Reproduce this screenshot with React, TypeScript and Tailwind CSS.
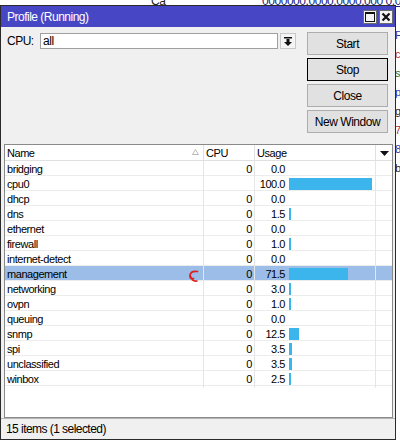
import React from "react";

type Proc = { name: string; cpu: string; usage: string; selected?: boolean };

const PROCS: Proc[] = [
  { name: "bridging", cpu: "0", usage: "0.0" },
  { name: "cpu0", cpu: "", usage: "100.0" },
  { name: "dhcp", cpu: "0", usage: "0.0" },
  { name: "dns", cpu: "0", usage: "1.5" },
  { name: "ethernet", cpu: "0", usage: "0.0" },
  { name: "firewall", cpu: "0", usage: "1.0" },
  { name: "internet-detect", cpu: "0", usage: "0.0" },
  { name: "management", cpu: "0", usage: "71.5", selected: true },
  { name: "networking", cpu: "0", usage: "3.0" },
  { name: "ovpn", cpu: "0", usage: "1.0" },
  { name: "queuing", cpu: "0", usage: "0.0" },
  { name: "snmp", cpu: "0", usage: "12.5" },
  { name: "spi", cpu: "0", usage: "3.5" },
  { name: "unclassified", cpu: "0", usage: "3.5" },
  { name: "winbox", cpu: "0", usage: "2.5" },
];

// full bar = 100% usage
const BAR_MAX = 83;

function barWidth(usage: string) {
  const v = parseFloat(usage);
  if (!v) return 0;
  return Math.max(2, Math.round((v / 100) * BAR_MAX));
}

function TitleButton({ kind }: { kind: "max" | "close" }) {
  return (
    <div className="w-[14px] h-[14px] bg-[#f4f4f4] border border-[#6b6b6b] flex items-center justify-center">
      {kind === "max" ? (
        <svg width="10" height="10" viewBox="0 0 10 10">
          <rect x="0.5" y="0.5" width="9" height="9" fill="none" stroke="#111" />
          <rect x="0" y="0" width="10" height="2" fill="#111" />
        </svg>
      ) : (
        <svg width="10" height="10" viewBox="0 0 10 10">
          <path d="M1.5 1.5 L8.5 8.5 M8.5 1.5 L1.5 8.5" stroke="#111" strokeWidth="2.2" />
        </svg>
      )}
    </div>
  );
}

function PushButton({ label, focused }: { label: string; focused?: boolean }) {
  return (
    <div
      className={`h-[23px] w-[81px] flex items-center justify-center bg-[#e1e1e1] text-[12px] tracking-[-0.45px] text-black border ${
        focused ? "border-[#000]" : "border-[#adadad]"
      }`}
    >
      {label}
    </div>
  );
}

// little red scribble left over next to the selected row
function Scribble() {
  return (
    <svg
      className="absolute right-[4px] top-[4px]"
      width="11"
      height="13"
      viewBox="0 0 11 13"
    >
      <path
        d="M9.5 1.5 Q3 0.5 2 5 Q1.5 9.5 5.5 8.5 M2.2 5.5 Q4 12 9 11"
        fill="none"
        stroke="#e0201c"
        strokeWidth="1.7"
        strokeLinecap="round"
      />
    </svg>
  );
}

export default function App() {
  return (
    <div className="relative w-[400px] h-[440px] bg-white overflow-hidden font-['Liberation_Sans',Arial,sans-serif] text-[11px] tracking-[-0.45px] text-black">
      {/* desktop window peeking out behind */}
      <div className="absolute top-[-8px] left-[151px] text-[12px] text-[#222]">Ca</div>
      <div className="absolute top-[-8px] left-[262px] text-[12px] text-[#1a237e] underline whitespace-nowrap">
        0000000.0000.0000.000 0.0 ncl
      </div>
      <div className="absolute top-[30px] left-[395px] flex flex-col gap-[9px] text-[11px] leading-[10px]">
        <span className="text-[#1a3fae]">F</span>
        <span className="text-[#b03030]">c</span>
        <span className="text-[#2b6e2b]">s</span>
        <span className="text-[#1a3fae]">p</span>
        <span className="text-[#222]">g</span>
        <span className="text-[#b03030]">7</span>
        <span className="text-[#1a3fae]">8</span>
        <span className="text-[#222]">b</span>
      </div>

      {/* Profile window */}
      <div className="absolute top-[5px] left-0 w-[396px] h-[435px] flex flex-col bg-[#f0f0f0] border border-[#2a2a2a]">
        {/* title bar */}
        <div className="h-[21px] shrink-0 bg-[#4747c6] flex items-center justify-between pl-[6px] pr-[2px]">
          <span className="text-white text-[12px] tracking-[-0.5px]">Profile (Running)</span>
          <div className="flex gap-[2px]">
            <TitleButton kind="max" />
            <TitleButton kind="close" />
          </div>
        </div>

        {/* controls */}
        <div className="h-[117px] shrink-0 flex justify-between pl-[6px] pr-[7px]">
          <div className="pt-[6px] flex items-start">
            <div className="h-[16px] w-[33px] flex items-center text-[12px] tracking-[-0.5px]">CPU:</div>
            <div className="h-[16px] w-[238px] bg-white border border-[#a0a0a0] flex items-center pl-[2px] text-[12px] tracking-[-0.45px]">
              all
            </div>
            <div className="ml-[2px] h-[16px] w-[16px] bg-[#f4f4f4] border border-[#c8c8c8] flex items-center justify-center">
              <svg width="8" height="9" viewBox="0 0 8 9">
                <rect x="0" y="0" width="8" height="1.5" fill="#111" />
                <rect x="2.5" y="2" width="3" height="3" fill="#111" />
                <path d="M0 5 L8 5 L4 9 Z" fill="#111" />
              </svg>
            </div>
          </div>
          <div className="pt-[5px] flex flex-col gap-[3px]">
            <PushButton label="Start" />
            <PushButton label="Stop" focused />
            <PushButton label="Close" />
            <PushButton label="New Window" />
          </div>
        </div>

        {/* process list */}
        <div className="h-[274px] shrink-0 ml-[3px] mr-[2px] bg-white border border-[#8a8a8a] flex flex-col">
          <div className="h-[16px] shrink-0 grid grid-cols-[199px_51px_121px_1fr] border-b border-[#e0e0e0]">
            <div className="relative pl-[2px] flex items-center border-r border-[#e0e0e0]">
              Name
              <svg className="absolute right-[4px] top-[4px]" width="7" height="6" viewBox="0 0 7 6">
                <path d="M3.5 0.5 L6.5 5.5 L0.5 5.5 Z" fill="none" stroke="#b9b9b9" />
              </svg>
            </div>
            <div className="pl-[2px] flex items-center border-r border-[#e0e0e0]">CPU</div>
            <div className="pl-[2px] flex items-center border-r border-[#e0e0e0]">Usage</div>
            <div className="flex items-center justify-center">
              <svg width="9" height="5" viewBox="0 0 9 5">
                <path d="M0 0 L9 0 L4.5 5 Z" fill="#111" />
              </svg>
            </div>
          </div>

          {PROCS.map((p) => (
            <div
              key={p.name}
              className={`h-[15px] shrink-0 grid grid-cols-[199px_51px_121px_1fr] border-b border-[#ececec] ${
                p.selected ? "bg-[#9bbde7]" : ""
              }`}
            >
              <div className="relative pl-[2px] flex items-center border-r border-[#e6e6e6]">
                {p.name}
                {p.selected && <Scribble />}
              </div>
              <div className="pr-[2px] flex items-center justify-end border-r border-[#e6e6e6]">
                {p.cpu}
              </div>
              <div className="flex items-center border-r border-[#e6e6e6]">
                <span className="w-[30px] text-right">{p.usage}</span>
                {barWidth(p.usage) > 0 && (
                  <div
                    className="ml-[4px] h-[12px] bg-[#3cb5ec]"
                    style={{ width: barWidth(p.usage) }}
                  />
                )}
              </div>
              <div />
            </div>
          ))}
        </div>

        {/* status bar */}
        <div className="flex-1 flex items-center pl-[5px] border-t border-[#b5b5b5] text-[12px] tracking-[-0.55px]">
          15 items (1 selected)
        </div>
      </div>
    </div>
  );
}
